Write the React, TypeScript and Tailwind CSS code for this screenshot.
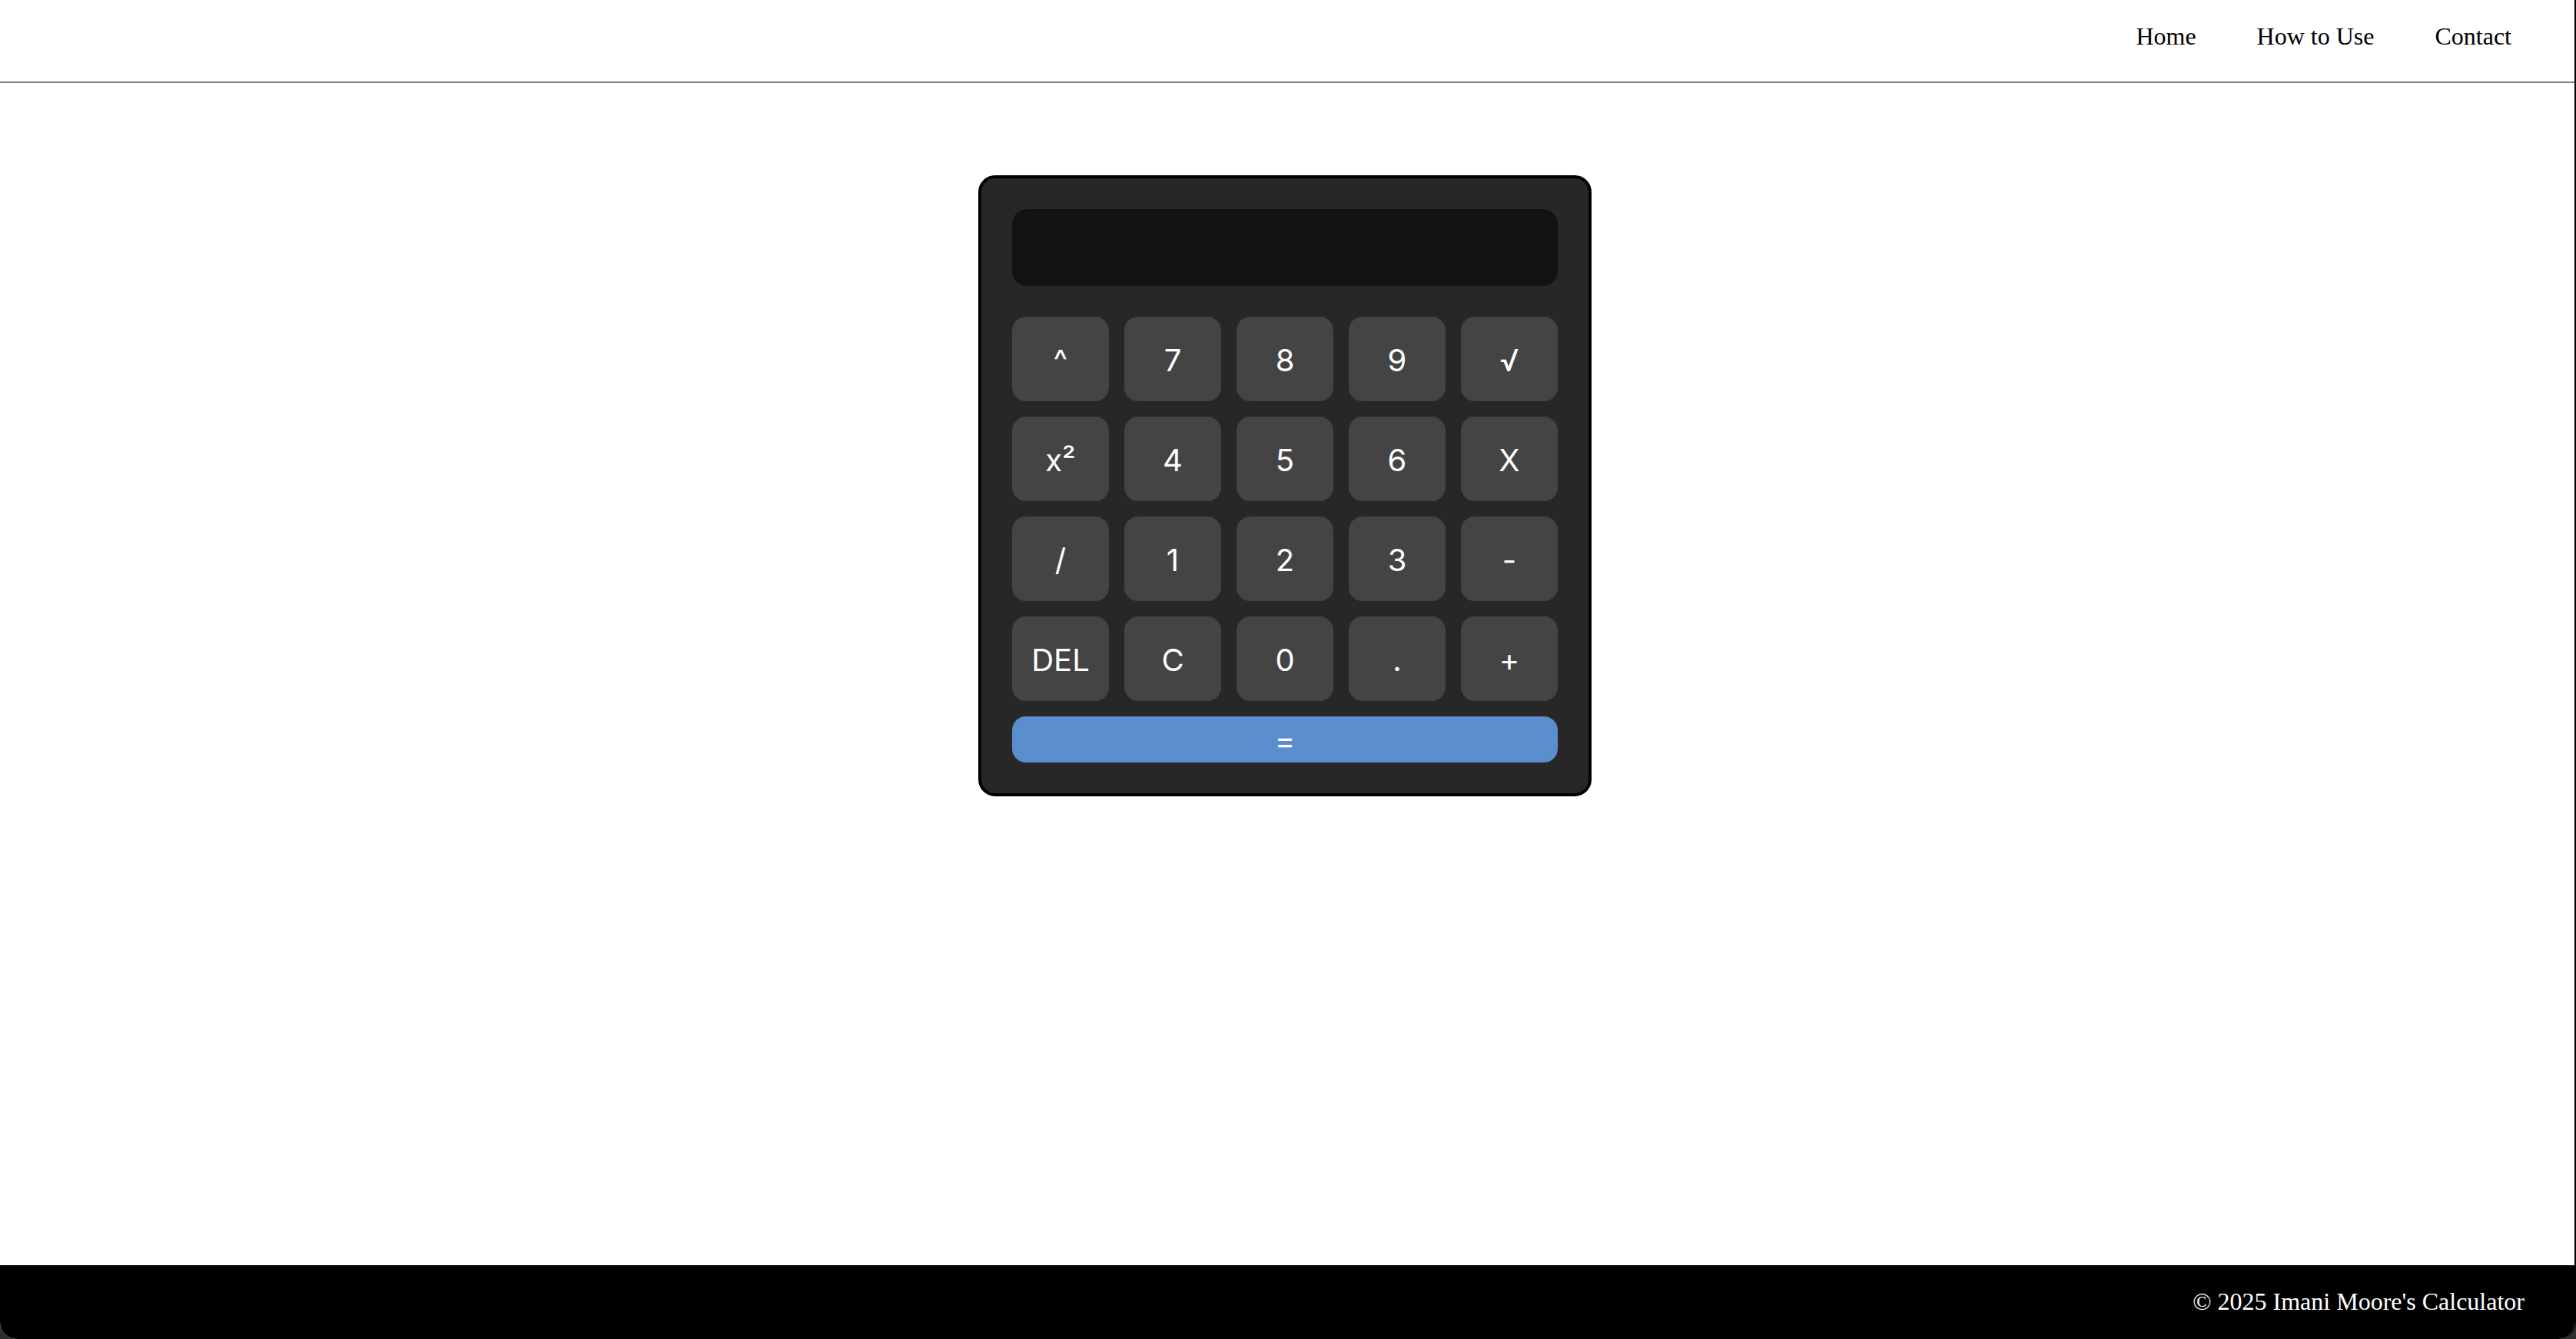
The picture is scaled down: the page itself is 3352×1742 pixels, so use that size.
import React from "react";

const serif = { fontFamily: '"Liberation Serif", "Times New Roman", serif' };
const sans = { fontFamily: 'Inter, "Noto Sans", "DejaVu Sans", sans-serif' };

const keys: string[] = [
  "^", "7", "8", "9", "√",
  "x²", "4", "5", "6", "X",
  "/", "1", "2", "3", "-",
  "DEL", "C", "0", ".", "+",
];

function Key({ label }: { label: string }) {
  return (
    <button
      type="button"
      className="flex h-[110px] items-center justify-center rounded-[18px] bg-[#444444] pt-1 text-[40px] leading-none text-white"
      style={sans}
    >
      {label}
    </button>
  );
}

export default function App() {
  return (
    <div className="h-[1742px] w-full bg-[#2e2e2e]">
      <div className="flex h-[1742px] flex-col overflow-hidden rounded-b-[22px] border-r-2 border-black bg-white">
        <header className="h-[108px] flex-none border-b-2 border-[#808080]">
          <nav
            className="flex justify-end gap-[79px] pr-[82px] pt-[29px] text-[32px] leading-[normal] text-black"
            style={serif}
          >
            <a href="#">Home</a>
            <a href="#">How to Use</a>
            <a href="#">Contact</a>
          </nav>
        </header>

        <main className="flex flex-1 items-start justify-center pr-[6px] pt-[120px]">
          <div className="w-[798px] rounded-[22px] border-4 border-black bg-[#272727] p-10">
            <div className="mb-10 h-[100px] rounded-[20px] bg-[#121212]" />
            <div className="grid grid-cols-5 gap-5">
              {keys.map((k) => (
                <Key key={k} label={k} />
              ))}
            </div>
            <button
              type="button"
              className="mt-5 flex h-[60px] w-full items-center justify-center rounded-[18px] bg-[#5b8ecf] pt-1 text-[40px] leading-none text-white"
              style={sans}
            >
              =
            </button>
          </div>
        </main>

        <footer
          className="h-[96px] flex-none bg-black pr-[65px] pt-[29px] text-right text-[32px] leading-[normal] text-white"
          style={serif}
        >
          © 2025 Imani Moore's Calculator
        </footer>
      </div>
    </div>
  );
}
